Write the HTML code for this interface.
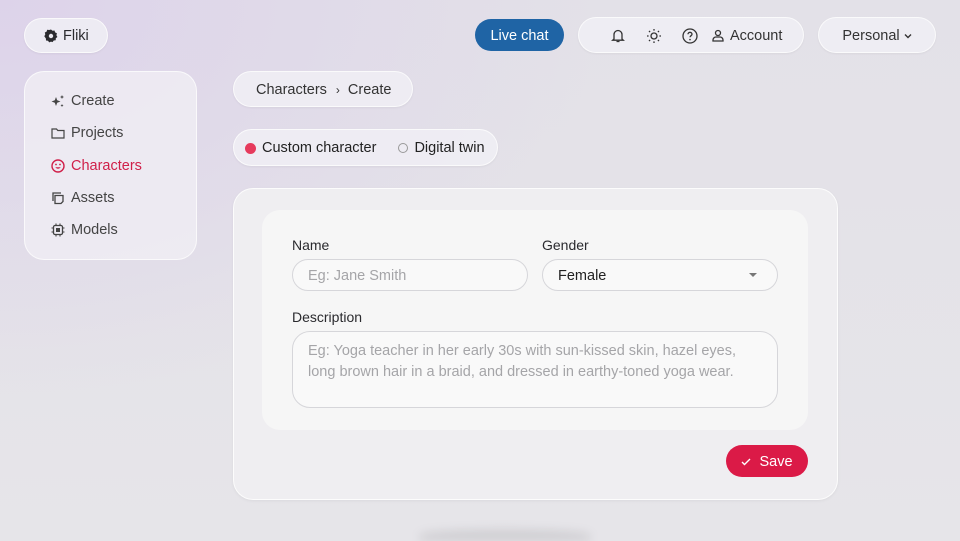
<!DOCTYPE html>
<html style="overflow:hidden;width:960px;height:541px"><head><meta charset="utf-8"><style>
*{box-sizing:border-box;margin:0;padding:0}
body{width:960px;height:541px;overflow:hidden;font-family:"Liberation Sans",sans-serif;color:#2a2a2e;font-size:14.5px;
background:radial-gradient(ellipse 600px 400px at 0 0,#ddd3ea 0%,rgba(221,211,234,0) 100%),linear-gradient(180deg,#e3e1e8,#e6e5e9);position:relative}
.pill{position:absolute;border-radius:999px;background:rgba(240,238,244,.85);border:1px solid rgba(255,255,255,.7);box-shadow:0 1px 2px rgba(0,0,0,.05);display:flex;align-items:center;padding-top:1px}
.abs{position:absolute}
svg{display:block}
.menu div{position:absolute;left:26px;display:flex;align-items:center;gap:6px;color:#444;font-size:14.5px}
.field{position:absolute;border:1px solid #d6d6da;background:#f9f9f9;border-radius:999px;display:flex;align-items:center;padding-left:15px;font-size:14.5px}
label{position:absolute;font-size:14px;color:#2a2a2e}
</style></head><body>
<div class="pill" style="left:24px;top:18px;width:84px;height:35px;padding-left:19px;gap:5px;font-size:14.5px">
<svg width="14" height="14" viewBox="0 0 14 14"><path d="M7 0.5l1.5 1.3 2-.3.6 1.9 1.8.9-.5 1.9 1 1.8-1.6 1.2-.1 2-2 .3-1.2 1.6L7 12.6l-1.8.8-1.2-1.6-2-.3-.1-2L.3 7.2l1-1.8-.5-1.9 1.8-.9.6-1.9 2 .3z" fill="#2a2a2e"/><circle cx="7" cy="7" r="2.2" fill="#e9e7ee"/></svg>Fliki</div>
<div class="abs" style="left:24px;top:71px;width:173px;height:189px;border-radius:20px;background:rgba(240,238,244,.8);border:1px solid rgba(255,255,255,.7)">
<div class="menu">
<div style="top:21px"><svg width="14" height="14" viewBox="0 0 14 14"><path d="M5 3l1.2 3.3L9.5 7.5 6.2 8.7 5 12 3.8 8.7 .5 7.5 3.8 6.3z" fill="#444"/><path d="M11 1l.6 1.4L13 3l-1.4.6L11 5l-.6-1.4L9 3l1.4-.6zM11 10l.5 1 1 .5-1 .5-.5 1-.5-1-1-.5 1-.5z" fill="#444"/></svg>Create</div>
<div style="top:53px"><svg width="14" height="14" viewBox="0 0 14 14"><path d="M1 3h4.5l1.3 1.5H13v7.5H1z" fill="none" stroke="#444" stroke-width="1.2"/></svg>Projects</div>
<div style="top:86px;color:#d0204a"><svg width="14" height="14" viewBox="0 0 14 14"><circle cx="7" cy="7" r="6" fill="none" stroke="#d0204a" stroke-width="1.4"/><circle cx="5" cy="5.5" r=".9" fill="#d0204a"/><circle cx="9" cy="5.5" r=".9" fill="#d0204a"/><path d="M4.2 8.2q2.8 3 5.6 0z" fill="#d0204a"/></svg>Characters</div>
<div style="top:118px"><svg width="14" height="14" viewBox="0 0 14 14"><path d="M4 12.5V4.5h8v6l-2 2zM2 10V2h8" fill="none" stroke="#444" stroke-width="1.3"/></svg>Assets</div>
<div style="top:150px"><svg width="14" height="14" viewBox="0 0 14 14"><rect x="2.5" y="2.5" width="9" height="9" rx="1.5" fill="none" stroke="#444" stroke-width="1.3"/><rect x="5" y="5" width="4" height="4" fill="#444"/><path d="M5 .5v2M9 .5v2M5 11.5v2M9 11.5v2M.5 5h2M.5 9h2M11.5 5h2M11.5 9h2" stroke="#444" stroke-width="1.1"/></svg>Models</div>
</div></div>
<div class="abs" style="left:475px;top:19px;width:89px;height:32px;border-radius:999px;background:#1f64a5;color:#fff;display:flex;align-items:center;justify-content:center;font-size:14.5px;padding-top:2px">Live chat</div>
<div class="pill" style="left:578px;top:17px;width:226px;height:36px;padding-left:32px;font-size:14.5px;color:#333">
<svg width="14" height="15" viewBox="0 0 14 15"><path d="M3 11V6.5a4 4 0 018 0V11l1.3 1.2H1.7z" fill="none" stroke="#333" stroke-width="1.3"/><path d="M5.5 13.5h3" stroke="#333" stroke-width="1.3"/></svg>
<svg style="margin-left:21px" width="16" height="16" viewBox="0 0 16 16"><circle cx="8" cy="8" r="3" fill="none" stroke="#333" stroke-width="1.3"/><path d="M8 1v1.6M8 13.4V15M1 8h1.6M13.4 8H15M3 3l1.1 1.1M11.9 11.9L13 13M3 13l1.1-1.1M11.9 4.1L13 3" stroke="#333" stroke-width="1.3"/></svg>
<svg style="margin-left:20px" width="16" height="16" viewBox="0 0 16 16"><circle cx="8" cy="8" r="7" fill="none" stroke="#333" stroke-width="1.3"/><path d="M6 6.3a2 2 0 114 0c0 1.3-2 1.5-2 3" fill="none" stroke="#333" stroke-width="1.3"/><circle cx="8" cy="11.6" r=".8" fill="#333"/></svg>
<svg style="margin-left:14px" width="12" height="13" viewBox="0 0 12 13"><circle cx="6" cy="4" r="2.5" fill="none" stroke="#333" stroke-width="1.3"/><path d="M1 12v-1a3 3 0 013-3h4a3 3 0 013 3v1z" fill="none" stroke="#333" stroke-width="1.3"/></svg>
<span style="margin-left:6px">Account</span></div>
<div class="pill" style="left:818px;top:17px;width:118px;height:36px;justify-content:center;font-size:14.5px;color:#333">Personal<svg style="margin-left:4px" width="8" height="6" viewBox="0 0 8 6"><path d="M1 1.5l3 3 3-3" fill="none" stroke="#333" stroke-width="1.4"/></svg></div>
<div class="pill" style="left:233px;top:71px;width:180px;height:36px;padding-left:22px;font-size:14.5px;color:#333">Characters<span style="margin:0 8px 0 9px;font-size:12px">›</span>Create</div>
<div class="pill" style="left:233px;top:129px;width:265px;height:37px;padding-left:11px;font-size:14.5px;color:#222">
<span style="width:11px;height:11px;border-radius:50%;background:#e63a5c;display:inline-block;margin-right:6px"></span>Custom character
<span style="width:10px;height:10px;border-radius:50%;border:1px solid #999;display:inline-block;margin:0 6px 0 22px"></span>Digital twin</div>
<div class="abs" style="left:233px;top:188px;width:605px;height:312px;border-radius:20px;background:#efeef1;border:1px solid rgba(255,255,255,.8);box-shadow:0 1px 3px rgba(0,0,0,.05)"></div>
<div class="abs" style="left:262px;top:210px;width:546px;height:220px;border-radius:18px;background:#f6f6f6"></div>
<label style="left:292px;top:237px">Name</label>
<label style="left:542px;top:237px">Gender</label>
<div class="field" style="left:292px;top:259px;width:236px;height:32px;color:#a5a5a8;padding-top:2px">Eg: Jane Smith</div>
<div class="field" style="left:542px;top:259px;width:236px;height:32px;color:#222;padding-top:2px">Female<svg style="position:absolute;right:20px;top:13px" width="8" height="5" viewBox="0 0 8 5"><path d="M0 0h8L4 4z" fill="#777"/></svg></div>
<label style="left:292px;top:309px">Description</label>
<div class="field" style="left:292px;top:331px;width:486px;height:77px;border-radius:18px;align-items:flex-start;padding-top:9px;line-height:21px;color:#a5a5a8">Eg: Yoga teacher in her early 30s with sun-kissed skin, hazel eyes,<br>long brown hair in a braid, and dressed in earthy-toned yoga wear.</div>
<div class="abs" style="left:726px;top:445px;width:82px;height:32px;border-radius:999px;background:#db1a47;color:#fff;display:flex;align-items:center;justify-content:center;gap:8px;font-size:14.5px;padding-top:1px"><svg width="10" height="8" viewBox="0 0 10 8"><path d="M1 4l2.5 2.5L9 1" fill="none" stroke="#fff" stroke-width="1.4"/></svg>Save</div>
<div class="abs" style="left:420px;top:530px;width:170px;height:11px;border-radius:50% 50% 0 0;background:rgba(0,0,0,.1);filter:blur(5px)"></div>
</body></html>
